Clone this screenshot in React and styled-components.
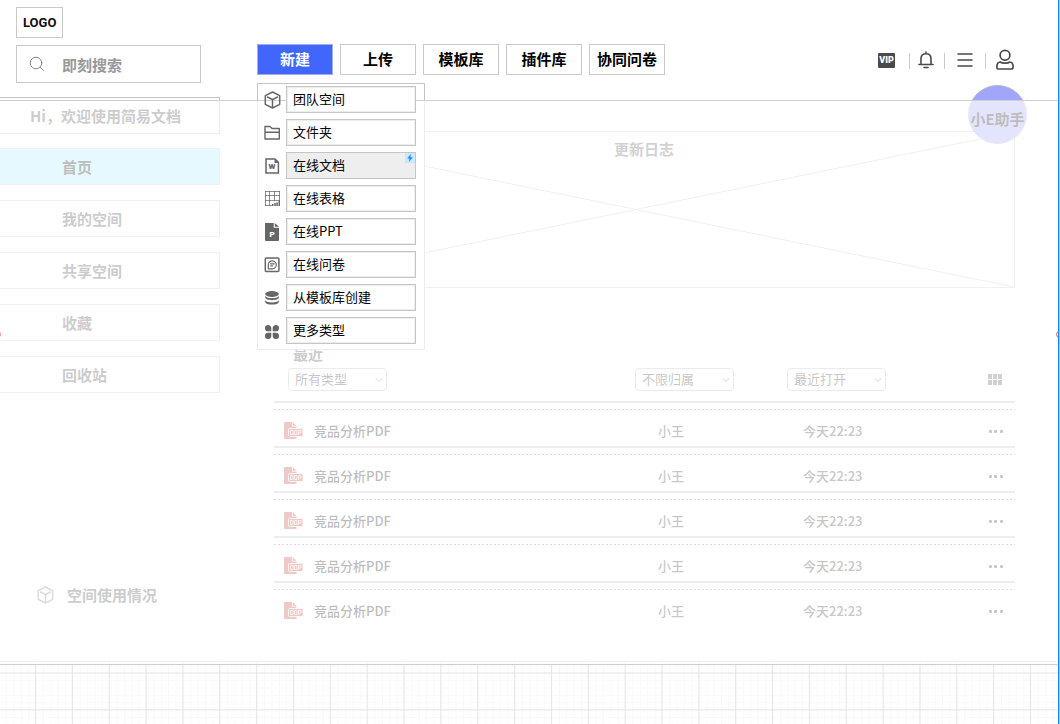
import React, {useState} from 'react';
import styled, {createGlobalStyle, css} from 'styled-components';

const GlobalStyle = createGlobalStyle`
    * {
        box-sizing: border-box;
    }
    body {
        margin: 0;
        background: #fff;
        font-family: 'Noto Sans CJK SC', 'Liberation Sans', sans-serif;
        font-size: 13px;
        color: #000;
    }
    button, input, select {
        font-family: inherit;
    }
    h1, h2, p, ul {
        margin: 0;
        padding: 0;
    }
    ul {
        list-style: none;
    }
`;

const Canvas = styled.div`
    position: relative;
    display: flex;
    flex-direction: column;
    min-height: 100vh;
    margin-right: 1px;
    border-right: 1px solid #1684fc;
    box-shadow: 1px 0 0 #9fcdfd;
    overflow: hidden;
`;

const Page = styled.div`
    position: relative;
    border-bottom: 1px solid #ccc;
`;

// 헤더 아래 영역 전체를 흐리게 덮는 막
const Veil = styled.div`
    position: absolute;
    top: 100px;
    left: 0;
    right: 0;
    bottom: -4px;
    z-index: 2;
    border-top: 1px solid #cfcfcf;
    border-bottom: 1px solid #cfcfcf;
    background: rgba(255, 255, 255, 0.7);
    pointer-events: none;
`;

const Header = styled.header`
    display: grid;
    grid-template-columns: 257px 1fr auto;
    height: 97px;
    padding-right: 43px;
`;

const Brand = styled.div`
    display: flex;
    flex-direction: column;
    align-items: flex-start;
    gap: 7px;
    padding: 7px 0 0 16px;
`;

const Logo = styled.h1`
    padding: 0 6px;
    border: 1px solid #c9c9c9;
    font-family: Roboto, 'Liberation Sans', sans-serif;
    font-size: 13px;
    line-height: 29px;
    font-weight: 700;
    color: #111;
`;

const Search = styled.label`
    display: flex;
    align-items: center;
    gap: 17px;
    width: 185px;
    height: 38px;
    padding-left: 12px;
    border: 1px solid #c9c9c9;
    color: #888;
`;

const SearchInput = styled.input`
    width: 110px;
    padding: 0;
    border: 0;
    outline: none;
    background: none;
    font-size: 15px;
    font-weight: 700;
    color: #999;
    &::placeholder {
        color: #999;
        opacity: 1;
    }
`;

const Toolbar = styled.nav`
    position: relative;
    display: flex;
    align-items: flex-start;
    gap: 7px;
    padding-top: 44px;
`;

const ToolButton = styled.button`
    width: 76px;
    height: 31px;
    padding: 0 0 2px;
    border: 1px solid #c9c9c9;
    background: #fff;
    font-size: 15px;
    line-height: 20px;
    font-weight: 700;
    color: #000;
    white-space: nowrap;
    cursor: pointer;
    ${p => p.$primary && css`
        border-color: #a3aee6;
        background: #4066fb;
        color: #fff;
    `}
`;

const Menu = styled.ul`
    position: absolute;
    top: 83px;
    left: 0;
    width: 168px;
    padding: 3px 9px 6px 7px;
    &::before {
        content: '';
        position: absolute;
        inset: 0;
        z-index: 1;
        border: 1px solid #c4c4c4;
        background: #fff;
    }
`;

const MenuRow = styled.li`
    position: relative;
    z-index: 3;
    display: flex;
    align-items: center;
    gap: 5px;
    color: #666;
    & + & {
        margin-top: 6px;
    }
`;

const MenuButton = styled.button`
    flex: 1;
    height: 27px;
    padding: 0 6px 2px;
    border: 1px solid #c6c6c6;
    box-shadow: inset 0 0 0 1px #ededed;
    background: ${p => p.$active ? '#eee' : '#fff'};
    font-size: 13px;
    line-height: 20px;
    text-align: left;
    color: #000;
    cursor: pointer;
`;

const Badge = styled.span`
    position: absolute;
    top: 1px;
    right: 1px;
    display: flex;
    align-items: center;
    justify-content: center;
    width: 10px;
    height: 10px;
    background: #cfe7fb;
    color: #1e8cff;
`;

const Actions = styled.div`
    display: flex;
    align-items: center;
    height: 32px;
    margin-top: 44px;
`;

const IconButton = styled.button`
    display: flex;
    padding: 0;
    border: 0;
    background: none;
    color: #4a4a4a;
    cursor: pointer;
`;

const Divider = styled.span`
    width: 1px;
    height: 16px;
    margin: 2px ${p => p.$right || 8}px 0 ${p => p.$left || 10}px;
    background: #ccc;
`;

const Vip = styled.span`
    width: 17px;
    height: 15px;
    border-radius: 1px;
    background: #4a4a4a;
    font-family: Roboto, 'Liberation Sans', sans-serif;
    font-size: 9px;
    line-height: 15px;
    font-weight: 900;
    text-align: center;
    color: #fff;
`;

const Assistant = styled.button`
    position: absolute;
    top: 85px;
    right: 31px;
    z-index: 1;
    width: 59px;
    height: 59px;
    padding: 8px 0 0;
    border: 1px solid #b4b4cc;
    border-radius: 50%;
    background: #a1a6fa;
    font-size: 15px;
    font-weight: 700;
    white-space: nowrap;
    color: #222;
    cursor: pointer;
`;

const Body = styled.div`
    display: grid;
    grid-template-columns: 257px 1fr;
    padding-right: 43px;
`;

const Sidebar = styled.aside`
    display: flex;
    flex-direction: column;
    width: 220px;
`;

const Welcome = styled.p`
    height: 37px;
    margin-bottom: 14px;
    padding-left: 30px;
    border: solid #c4c4c4;
    border-width: 1px 1px 1px 0;
    font-size: 15px;
    line-height: 35px;
    font-weight: 700;
    color: #555;
`;

const SideLink = styled.a`
    display: block;
    height: 37px;
    margin-bottom: 15px;
    padding-left: 62px;
    border: solid #ccc;
    border-width: 1px 1px 1px 0;
    background: ${p => p.$active ? '#acebff' : 'none'};
    font-size: 15px;
    line-height: 35px;
    font-weight: 700;
    color: ${p => p.$active ? '#222' : '#555'};
    text-decoration: none;
`;

const Storage = styled.div`
    display: flex;
    align-items: center;
    gap: 13px;
    margin: auto 0 55px;
    padding-left: 37px;
    font-size: 15px;
    line-height: 22px;
    font-weight: 700;
    color: #555;
    svg {
        color: #888;
    }
`;

const Main = styled.main`
    padding-top: 34px;
`;

const Banner = styled.section`
    position: relative;
    height: 157px;
    padding: 6px 0 0 16px;
    border: 1px solid #ccc;
    text-align: center;
`;

const Cross = styled.svg`
    position: absolute;
    top: 0;
    left: 0;
    width: 100%;
    height: 100%;
`;

const BannerTitle = styled.h2`
    font-size: 15px;
    line-height: 22px;
    font-weight: 700;
    color: #666;
`;

const Recent = styled.section`
    padding: 54px 0 33px 17px;
`;

const RecentTitle = styled.h2`
    padding-left: 19px;
    font-size: 15px;
    line-height: 24px;
    font-weight: 700;
    color: #555;
`;

const FileTable = styled.table`
    display: block;
    thead, tbody {
        display: block;
    }
`;

const columns = css`
    display: grid;
    grid-template-columns: 1fr 152px 201px 27px;
    align-items: center;
`;

const HeadRow = styled.tr`
    ${columns}
    height: 37px;
    padding: 1px 0 10px;
    border-bottom: 2px solid #c2c2c2;
`;

const HeadCell = styled.th`
    display: flex;
    padding: 0 0 0 ${p => p.$indent || 0}px;
    color: #777;
    button {
        color: #666;
    }
`;

const SelectBox = styled.div`
    position: relative;
    display: flex;
    svg {
        position: absolute;
        top: 8px;
        right: 4px;
        pointer-events: none;
    }
`;

const Select = styled.select`
    appearance: none;
    width: 99px;
    height: 23px;
    padding: 0 6px 1px;
    border: 1px solid #bbb;
    border-radius: 4px;
    background: none;
    font-size: 13px;
    line-height: 20px;
    color: #444;
`;

const FileRow = styled.tr`
    ${columns}
    height: 39px;
    margin-top: 6px;
    padding-top: 1px;
    border-bottom: 2px solid ${p => p.$last ? 'transparent' : '#c2c2c2'};
    background: repeating-linear-gradient(90deg, #888 0 2px, transparent 2px 4px) top / 100% 1px no-repeat;
`;

const Cell = styled.td`
    display: flex;
    align-items: center;
    gap: 11px;
    padding: 6px 0 0 ${p => p.$indent || 0}px;
    font-size: 13px;
    line-height: 20px;
    font-weight: 500;
    color: ${p => p.$name ? '#222' : '#444'};
    button {
        color: #444;
    }
`;

const Grid = styled.svg`
    flex: 1;
    display: block;
    width: 100%;
    min-height: 60px;
`;

const Handle = styled.span`
    position: absolute;
    width: 7px;
    height: 7px;
    z-index: 4;
    border: 1px solid ${p => p.$color};
    border-radius: 50%;
    background: #fff;
    ${p => p.$place}
`;

const stroke = {fill: 'none', stroke: 'currentColor', strokeLinejoin: 'round', strokeLinecap: 'round'};

const CubeIcon = () => (
    <svg width="17" height="18" viewBox="0 0 17 18" {...stroke} strokeWidth="1.5">
        <path d="M8.5 1 15.7 4.7v8.6L8.5 17 1.3 13.3V4.7z" />
        <path d="M3.5 6 8.5 8.6 13.5 6M8.5 8.6V16" />
    </svg>
);

const FolderIcon = () => (
    <svg width="17" height="18" viewBox="0 0 17 18" {...stroke} strokeWidth="1.4">
        <path d="M1 15V2.500h5l2 2h7.300V15zM1 8.300h14.300" />
    </svg>
);

const DocIcon = () => (
    <svg width="17" height="18" viewBox="0 0 17 18">
        <path d="M2 2h9l3.400 3.400V16H2z" fill="none" stroke="currentColor" strokeWidth="1.5" />
        <path d="M10.500 2v4h4z" fill="currentColor" />
        <text x="8" y="12" textAnchor="middle" fontFamily="Roboto, sans-serif" fontSize="8" fontWeight="900" fill="currentColor">W</text>
    </svg>
);

const SheetIcon = () => (
    <svg width="17" height="18" viewBox="0 0 17 18">
        <path d="M1 1.500h15M1 5.500h15M1 10.500h15M1 15.500h7M1.500 1v15M5.500 1v15M10.500 1v10M15.500 1v15" fill="none" stroke="currentColor" strokeWidth="1" opacity=".75" />
        <path d="M8 14h1.500v2H8zM10.300 13h1.500v3h-1.500zM12.300 12.500h1.500V16h-1.500zM14.500 11H16v5h-1.500z" fill="currentColor" />
    </svg>
);

const SlideIcon = () => (
    <svg width="17" height="18" viewBox="0 0 17 18">
        <path d="M1 0h8.700v4.800H15V17q0 1-1 1H2q-1 0-1-1zM10.800 0l4.200 3.800h-4.200z" fill="currentColor" />
        <text x="8" y="14" textAnchor="middle" fontFamily="Roboto, sans-serif" fontSize="8" fontWeight="900" fill="#fff">P</text>
    </svg>
);

const FormIcon = () => (
    <svg width="17" height="18" viewBox="0 0 17 18" {...stroke} strokeWidth="1.5">
        <rect x="1.300" y="2" width="13.600" height="13.600" rx="1" />
        <path d="M4.300 12.800V8.600a4 4 0 1 1 4 4.200z" strokeWidth="1.2" />
        <path d="M6.600 7.800h3.600M6.600 9.800h2" strokeWidth="1.2" />
    </svg>
);

const StackIcon = () => (
    <svg width="17" height="18" viewBox="0 0 17 18" fill="currentColor">
        <ellipse cx="8" cy="5" rx="6.800" ry="3" />
        <path d="M1.200 7c1.600 3 12 3 13.600 0v1.500c0 3.500-13.600 3.500-13.600 0zM1.200 11.200c1.600 3 12 3 13.600 0v1.500c0 3.800-13.600 3.800-13.600 0z" />
    </svg>
);

const MoreIcon = () => (
    <svg width="17" height="18" viewBox="0 0 17 18" fill="currentColor">
        <path d="M7.300 9.300H4.400A3.200 3.200 0 1 1 7.300 5.500zM8.700 9.300h2.900a3.200 3.200 0 1 0-2.900-3.800zM7.300 10.700H4.400a3.200 3.200 0 1 0 2.900 3.800zM8.700 10.700h2.900a3.200 3.200 0 1 1-2.900 3.800z" />
    </svg>
);

const SearchIcon = () => (
    <svg width="16" height="16" viewBox="0 0 16 16" {...stroke} strokeWidth="1">
        <circle cx="7" cy="7" r="5.800" />
        <path d="m11.200 11.200 3.300 3.300" />
    </svg>
);

const BellIcon = () => (
    <svg width="16" height="18" viewBox="0 0 16 18" {...stroke} strokeWidth="1.6">
        <path d="M1 13.500h14M3 13.500V7.800C3 4.700 5 2.700 8 2.700s5 2 5 5.100v5.700M8 2.500V1" />
        <path d="M6 16.500h4" />
    </svg>
);

const BarsIcon = () => (
    <svg width="16" height="16" viewBox="0 0 16 16" {...stroke} strokeWidth="1.6">
        <path d="M1 2h14M1 8h14M1 14h14" />
    </svg>
);

const UserIcon = () => (
    <svg width="20" height="22" viewBox="0 0 20 22" {...stroke} strokeWidth="1.7">
        <circle cx="10" cy="6.300" r="4.900" />
        <path d="M5.200 13c1.800 1.400 7.800 1.400 9.600 0 2 .2 3.300 2 3.300 4.500 0 1.800-.4 2.500-1.600 2.500h-13c-1.200 0-1.600-.7-1.600-2.500 0-2.500 1.300-4.300 3.300-4.500z" />
    </svg>
);

const BoltIcon = () => (
    <svg width="6" height="8" viewBox="0 0 6 8">
        <path d="M3.800 0 .2 4.600h2.200L2 8l3.800-4.800H3.500z" fill="currentColor" />
    </svg>
);

const ChevronIcon = () => (
    <svg width="8" height="8" viewBox="0 0 8 8" {...stroke} strokeWidth="1">
        <path d="m1 2.500 3 3 3-3" />
    </svg>
);

const TilesIcon = () => (
    <svg width="14" height="11" viewBox="0 0 14 11" fill="currentColor">
        <path d="M0 0h4v5H0zM5 0h4v5H5zM10 0h4v5h-4zM0 6h4v5H0zM5 6h4v5H5zM10 6h4v5h-4z" />
    </svg>
);

const DotsIcon = () => (
    <svg width="16" height="4" viewBox="0 0 16 4" fill="currentColor">
        <rect x="1" y="1" width="3" height="3" rx="1" />
        <rect x="6" y="1" width="3" height="3" rx="1" />
        <rect x="12" y="1" width="3" height="3" rx="1" />
    </svg>
);

const PdfIcon = () => (
    <svg width="19" height="18" viewBox="0 0 19 18">
        <path d="M1 0h7v4.500h4.500V17H1q-1 0-1-1V1q0-1 1-1zM8.800 0l3.700 3.700H8.800z" fill="#ca4a45" />
        <rect x="4.500" y="6.500" width="14.500" height="8" rx="1" fill="#ca4a45" stroke="#fff" strokeWidth=".8" />
        <path d="M6.500 8.500h2.500v4H6.500zM10.500 8.500H13v4h-2.500zM14.500 13V8.500H17V11h-2.500" fill="none" stroke="#fff" strokeWidth=".7" />
    </svg>
);

const menuItems = [
    {text: '团队空间', Icon: CubeIcon},
    {text: '文件夹', Icon: FolderIcon},
    {text: '在线文档', Icon: DocIcon, active: true},
    {text: '在线表格', Icon: SheetIcon},
    {text: '在线PPT', Icon: SlideIcon},
    {text: '在线问卷', Icon: FormIcon},
    {text: '从模板库创建', Icon: StackIcon},
    {text: '更多类型', Icon: MoreIcon},
];

const tools = ['上传', '模板库', '插件库', '协同问卷'];
const links = ['首页', '我的空间', '共享空间', '收藏', '回收站'];
const files = [1, 2, 3, 4, 5].map(id => ({id, name: '竞品分析PDF', owner: '小王', time: '今天22:23'}));

const Filter = ({label}) => (
    <SelectBox>
        <Select aria-label={label}>
            <option>{label}</option>
        </Select>
        <ChevronIcon />
    </SelectBox>
);

// 新建 버튼 아래에 펼쳐지는 메뉴
const CreateMenu = () => (
    <Menu>
        {menuItems.map(({text, Icon, active}) => (
            <MenuRow key={text}>
                <Icon />
                <MenuButton $active={active}>{text}</MenuButton>
                {active && <Badge><BoltIcon /></Badge>}
            </MenuRow>
        ))}
    </Menu>
);

const RecentFiles = () => (
    <Recent>
        <RecentTitle>最近</RecentTitle>
        <FileTable>
            <thead>
                <HeadRow>
                    <HeadCell $indent={14}><Filter label="所有类型" /></HeadCell>
                    <HeadCell><Filter label="不限归属" /></HeadCell>
                    <HeadCell><Filter label="最近打开" /></HeadCell>
                    <HeadCell><IconButton aria-label="视图"><TilesIcon /></IconButton></HeadCell>
                </HeadRow>
            </thead>
            <tbody>
                {files.map((file, i) => (
                    <FileRow key={file.id} $last={i === files.length - 1}>
                        <Cell $name $indent={10}><PdfIcon />{file.name}</Cell>
                        <Cell $indent={23}>{file.owner}</Cell>
                        <Cell $indent={16}>{file.time}</Cell>
                        <Cell><IconButton aria-label="更多"><DotsIcon /></IconButton></Cell>
                    </FileRow>
                ))}
            </tbody>
        </FileTable>
    </Recent>
);

const CanvasGrid = () => (
    <Grid>
        <defs>
            <pattern id="minor" x="35.600" y="10.800" width="7.370" height="7.370" patternUnits="userSpaceOnUse">
                <path d="M.5 0v7.370M0 .5h7.370" stroke="#f9f9f9" fill="none" />
            </pattern>
            <pattern id="major" x="35" y="10.500" width="36.850" height="36.850" patternUnits="userSpaceOnUse">
                <path d="M.5 0v36.850M0 .5h36.850" stroke="#e6e6e6" fill="none" />
            </pattern>
        </defs>
        <rect width="100%" height="100%" fill="url(#minor)" />
        <rect width="100%" height="100%" fill="url(#major)" />
    </Grid>
);

const App = () => {
    const [open, setOpen] = useState(true);
    const [keyword, setKeyword] = useState('');

    const onToggle = () => setOpen(!open);
    const onChange = (e) => setKeyword(e.target.value);

    return (
        <>
            <GlobalStyle />
            <Canvas>
                <Page>
                    <Header>
                        <Brand>
                            <Logo>LOGO</Logo>
                            <Search>
                                <SearchIcon />
                                <SearchInput aria-label="即刻搜索" placeholder="即刻搜索" value={keyword} onChange={onChange} />
                            </Search>
                        </Brand>
                        <Toolbar>
                            <ToolButton $primary onClick={onToggle}>新建</ToolButton>
                            {tools.map(text => <ToolButton key={text}>{text}</ToolButton>)}
                            {open && <CreateMenu />}
                        </Toolbar>
                        <Actions>
                            <IconButton><Vip>VIP</Vip></IconButton>
                            <Divider $left={14} />
                            <IconButton aria-label="通知"><BellIcon /></IconButton>
                            <Divider $right={12} />
                            <IconButton aria-label="菜单"><BarsIcon /></IconButton>
                            <Divider $left={12} $right={9} />
                            <IconButton aria-label="用户"><UserIcon /></IconButton>
                        </Actions>
                    </Header>
                    <Body>
                        <Sidebar>
                            <Welcome>Hi，欢迎使用简易文档</Welcome>
                            {links.map((text, i) => (
                                <SideLink key={text} href="#" $active={i === 0}>{text}</SideLink>
                            ))}
                            <Storage><CubeIcon />空间使用情况</Storage>
                        </Sidebar>
                        <Main>
                            <Banner>
                                <Cross viewBox="0 0 100 100" preserveAspectRatio="none">
                                    <path d="M0 0 100 100M0 100 100 0" stroke="#ccc" fill="none" vectorEffect="non-scaling-stroke" />
                                </Cross>
                                <BannerTitle>更新日志</BannerTitle>
                            </Banner>
                            <RecentFiles />
                        </Main>
                    </Body>
                    <Assistant>小E助手</Assistant>
                    <Veil />
                </Page>
                <CanvasGrid />
                <Handle $color="#f56bd0" $place="top: 331px; left: -6px;" />
                <Handle $color="#f0503c" $place="top: 331px; right: -5px;" />
                <Handle $color="#f0324b" $place="bottom: -5px; left: 535px;" />
                <Handle $color="#1684fc" $place="bottom: -5px; left: -4px;" />
                <Handle $color="#1684fc" $place="bottom: -5px; right: -4px;" />
            </Canvas>
        </>
    );
};

export default App;
